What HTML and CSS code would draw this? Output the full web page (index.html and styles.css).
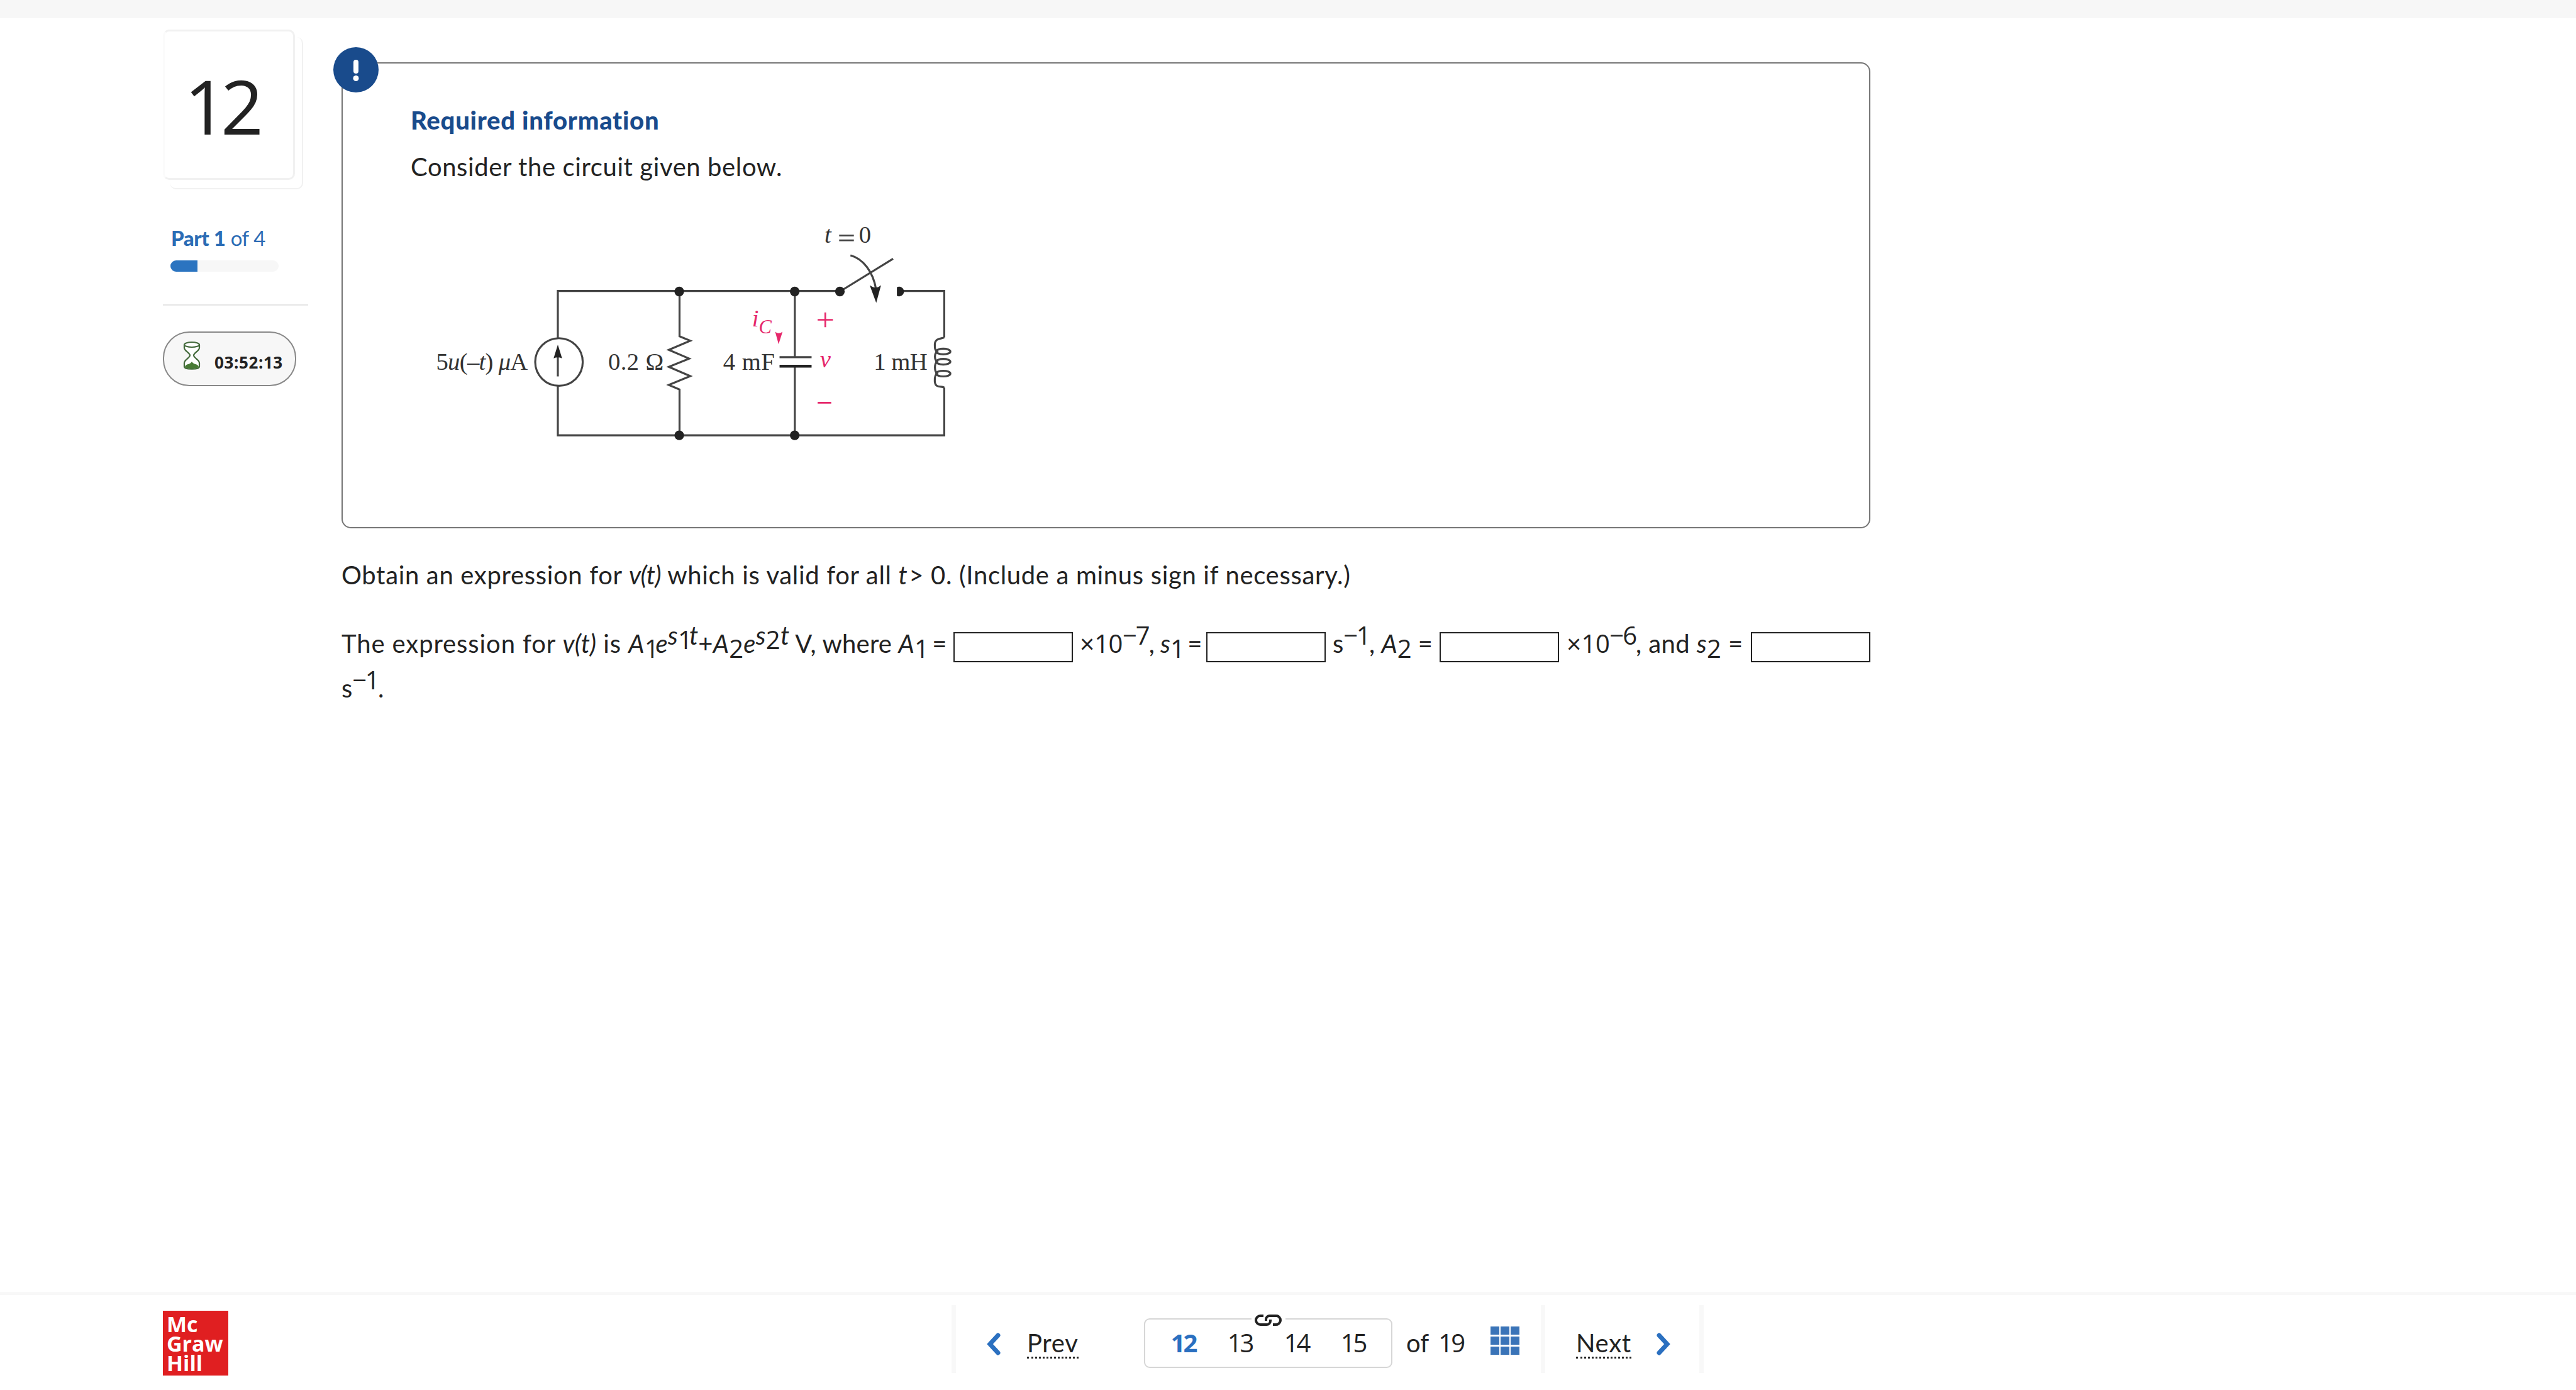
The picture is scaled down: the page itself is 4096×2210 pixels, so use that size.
FILE: index.html
```html
<!DOCTYPE html>
<html lang="en">
<head>
    <meta charset="UTF-8">
    <meta name="viewport" content="width=device-width, initial-scale=1.0">
    <title>Question 12</title>
    <link rel="stylesheet" href="styles.css">
</head>
<body>
    <div class="topbar"></div>
    <div class="page">
        <aside class="sidebar">
            <div class="number-card"><span>12</span></div>
            <div class="part"><strong>Part 1</strong> of 4</div>
            <div class="progress"><div class="progress-fill"></div></div>
            <div class="timer">
                <svg class="hourglass" viewBox="0 0 28 46">
                    <path d="M2 6v5c0 5 9 8 9 12s-9 7-9 12v6c0 5 24 5 24 0v-6c0-5-9-8-9-12s9-7 9-12V6" fill="#fff" stroke="#456b3d" stroke-width="2.2"/>
                    <ellipse cx="14" cy="6" rx="12" ry="4" fill="#fff" stroke="#456b3d" stroke-width="2.2"/>
                    <path d="M3 41c2-5 8-3 11-8 3 5 9 3 11 8 0 4-22 4-22 0z" fill="#487a35"/>
                </svg>
                <span class="time">03:52:13</span>
            </div>
        </aside>
        <main class="content">
            <section class="info-box">
                <div class="info-badge">
                    <svg viewBox="0 0 72 72">
                        <circle cx="36" cy="36" r="36" fill="#194b8c"/>
                        <path d="M36 24v14" stroke="#fff" stroke-width="8" stroke-linecap="round"/>
                        <circle cx="36" cy="49.500" r="4.500" fill="#fff"/>
                    </svg>
                </div>
                <h2>Required information</h2>
                <p class="intro">Consider the circuit given below.</p>
                <svg class="circuit" viewBox="0 0 1000 430">
                    <!-- wires -->
                    <g class="wire">
                        <path d="M245 227V144H743"/>
                        <path d="M245 311V399H927.700V315"/>
                        <path d="M848 144H927.700V226"/>
                        <path d="M663.700 144V261M663.700 277V399"/>
                    </g>
                    <!-- current source -->
                    <circle class="wire" cx="247" cy="269.500" r="42"/>
                    <path class="wire" d="M245 258V295"/>
                    <path class="solid" d="M245 239L252.500 263Q245 260 237.500 263z"/>
                    <!-- resistor -->
                    <path class="wire" d="M460 144V224L479 232L441 248L477 263.500L441 278L479 294.500L441 310L460 318V399"/>
                    <!-- capacitor -->
                    <path class="wire" d="M636.700 261H693.300"/>
                    <path class="wire thick" d="M636.700 277H693.300"/>
                    <!-- inductor -->
                    <path class="wire" d="M927.700 226C924 229 911 226 911 239C911 245 911 248 915 251C910 255 910 265 915 269C910 273 910 285 915 290C910 293 911 300 911 304C912 317 924 311 927.700 315"/>
                    <ellipse class="wire" cx="926" cy="251" rx="12.500" ry="5"/>
                    <ellipse class="wire" cx="926" cy="269" rx="12.500" ry="5"/>
                    <ellipse class="wire" cx="926" cy="290" rx="12.500" ry="5"/>
                    <!-- switch -->
                    <path class="wire" d="M743.300 145L837.300 87"/>
                    <path class="wire" d="M762 81C785 87 802 111 807 140"/>
                    <path class="solid" d="M796 134Q807 142 816 134L807.500 165z"/>
                    <circle class="solid" cx="459.500" cy="145" r="8.500"/>
                    <circle class="solid" cx="663.500" cy="145" r="8.500"/>
                    <circle class="solid" cx="743.300" cy="145" r="8.500"/>
                    <path class="solid" d="M844 137.500a8.500 8.500 0 1 1 0 15z"/>
                    <circle class="solid" cx="459.500" cy="399" r="8.500"/>
                    <circle class="solid" cx="663.500" cy="399" r="8.500"/>
                    <!-- labels -->
                    <text x="30" y="283" textLength="162">5<tspan class="it">u</tspan>(–<tspan class="it">t</tspan>) <tspan class="it">μ</tspan>A</text>
                    <text x="334" y="283" textLength="98">0.2 Ω</text>
                    <text x="537" y="283" textLength="91">4 mF</text>
                    <text x="803" y="283" textLength="95">1 mH</text>
                    <text class="it" x="716" y="59">t</text>
                    <path class="wire thin" d="M742 46H768M742 54.500H768"/>
                    <text x="777" y="59">0</text>
                    <g class="pink">
                        <text class="it" x="588" y="207">i</text>
                        <text class="it sub-c" x="600" y="219">C</text>
                        <path d="M629 216Q635 221 642 216L635 238z"/>
                        <path class="pink-line" d="M704 195H731M717.500 182V208M704 341.500H728"/>
                        <text class="it" x="708" y="279">v</text>
                    </g>
                </svg>
            </section>
            <p class="question">Obtain an expression for <i class="fn">v(t)</i> which is valid for all <i class="var">t</i> &gt; 0. (Include a minus sign if necessary.)</p>
            <div class="answer">
                <span class="lead"><span class="words">The expression for <i class="fn">v(t)</i> is </span><i>A</i><span class="sub one">1</span><i>e</i><span class="sup"><i>s</i><span class="supsub one">1</span><i>t</i></span>+<i>A</i><span class="sub">2</span><i>e</i><span class="sup"><i>s</i><span class="supsub">2</span><i>t</i></span> V, where <i>A</i><span class="sub one">1</span> =</span>
                <input type="text" class="blank">
                <span class="seg tight">×<span class="ten">10</span><span class="sup exp">−7</span>, <i>s</i><span class="sub one">1</span> =</span>
                <input type="text" class="blank">
                <span class="seg">s<span class="sup exp-one">−1</span>, <i>A</i><span class="sub">2</span> =</span>
                <input type="text" class="blank">
                <span class="seg loose">×<span class="ten">10</span><span class="sup exp">−6</span>, and <i>s</i><span class="sub">2</span> =</span>
                <input type="text" class="blank">
            </div>
            <p class="unit">s<span class="sup exp-one">−1</span>.</p>
        </main>
    </div>
    <footer class="footer">
        <div class="logo">Mc<br>Graw<br>Hill</div>
        <nav class="nav">
            <a class="prev">
                <svg class="chevron" viewBox="0 0 22 36"><path d="M18 4L5 18L18 32"/></svg>
                <span>Prev</span>
            </a>
            <div class="pager">
                <div class="pages">
                    <b>12</b><span>13</span><span>14</span><span>15</span>
                    <svg class="link-icon" viewBox="0 0 54 24">
                        <path d="M19 5H14a7 7 0 0 0 0 14H24a6 6 0 0 0 6-6v-2"/>
                        <path d="M34 19h5a7 7 0 0 0 0-14H29a6 6 0 0 0-6 6v2"/>
                    </svg>
                </div>
                <span class="of">of</span>
                <span class="total">19</span>
                <div class="grid-icon"><i></i><i></i><i></i><i></i><i></i><i></i><i></i><i></i><i></i></div>
            </div>
            <a class="next">
                <span>Next</span>
                <svg class="chevron" viewBox="0 0 22 36"><path d="M4 4L17 18L4 32"/></svg>
            </a>
        </nav>
    </footer>
</body>
</html>
```
FILE: styles.css
```css
* {
    box-sizing: border-box;
}
body {
    margin: 0;
    height: 2210px;
    display: flex;
    flex-direction: column;
    background: #fff;
    color: #222;
    font-family: Lato, "Open Sans", sans-serif;
    font-size: 40px;
    line-height: 60px;
    overflow: hidden;
}
h2, p {
    margin: 0;
    font-size: 40px;
}
/* digits with a plain, footless 1 */
.number-card,
.time,
.pages,
.total,
.sub,
.supsub,
.exp,
.exp-one,
.ten {
    font-family: "Open Sans", sans-serif;
}
.topbar {
    height: 29px;
    background: #f7f7f7;
}
.page {
    flex: 1;
    display: flex;
    padding-left: 259px;
}
/* sidebar */
.sidebar {
    width: 231px;
    margin-right: 53px;
    padding-top: 18px;
}
.number-card {
    position: relative;
    width: 210px;
    height: 239px;
    border: 3px solid #f1f1f1;
    border-left-color: #fbfbfb;
    border-radius: 10px;
    background: #fff;
    display: flex;
    justify-content: center;
    padding: 58px 26px 0 0;
    font-size: 119px;
    line-height: 120px;
    letter-spacing: -10px;
}
.number-card::after {
    content: "";
    position: absolute;
    left: 8px;
    top: 9px;
    width: 210px;
    height: 240px;
    border: 2px solid #f1f1f1;
    border-left: none;
    border-top: none;
    border-radius: 10px;
}
.part {
    margin: 62px 0 0 13px;
    font-size: 33px;
    letter-spacing: -0.4px;
    color: #2b6cb5;
    white-space: nowrap;
}
.part strong {
    font-weight: 900;
}
.progress {
    margin: 6px 0 0 12px;
    width: 172px;
    height: 18px;
    border-radius: 9px;
    background: #f7f7f7;
}
.progress-fill {
    width: 25%;
    height: 18px;
    border-radius: 9px 0 0 9px;
    background: #2b74c0;
}
.timer {
    position: relative;
    display: flex;
    align-items: flex-start;
    width: 212px;
    height: 87px;
    margin-top: 95px;
    padding: 13px 0 0 30px;
    border: 2px solid #888;
    border-radius: 42px;
    background: #f7f7f7;
}
.timer::before {
    content: "";
    position: absolute;
    left: -2px;
    top: -46px;
    width: 231px;
    height: 3px;
    background: #ebebeb;
}
.hourglass {
    width: 28px;
    height: 46px;
}
.time {
    margin: 19px 0 0 22px;
    font-size: 26px;
    line-height: 30px;
    font-weight: 700;
    letter-spacing: 0.6px;
}
/* question */
.content {
    width: 2431px;
    padding-top: 70px;
}
.info-box {
    position: relative;
    height: 741px;
    border: 2px solid #767676;
    border-radius: 15px;
    padding: 60px 0 0 108px;
}
.info-badge {
    position: absolute;
    left: -15px;
    top: -26px;
    width: 72px;
    height: 72px;
}
.info-badge svg {
    display: block;
}
.info-box h2 {
    color: #194b8c;
    font-weight: 900;
    letter-spacing: 0.75px;
}
.intro {
    margin-top: 14px;
    letter-spacing: 0.6px;
}
.circuit {
    display: block;
    width: 901px;
    height: 387px;
    margin: 38px 0 0 13px;
    font-family: "Liberation Serif", serif;
    font-size: 43px;
}
.circuit text {
    fill: #333;
}
.circuit .it {
    font-style: italic;
}
.wire {
    fill: none;
    stroke: #444;
    stroke-width: 3.5;
}
.thick {
    stroke: #222;
    stroke-width: 5;
}
.thin {
    stroke-width: 3;
}
.solid {
    fill: #222;
}
.pink {
    fill: #e6286b;
}
.circuit .pink text {
    fill: #e6286b;
}
.circuit .sub-c {
    font-size: 34px;
}
.pink-line {
    stroke: #e6286b;
    stroke-width: 3;
}
.question {
    margin-top: 44px;
    letter-spacing: 0.67px;
    white-space: nowrap;
}
.fn {
    letter-spacing: -0.6px;
}
.var {
    margin-right: -9px;
}
.answer {
    display: grid;
    grid-template-columns: 973px 191px 211px 190px 181px 191px 304px 190px;
    margin-top: 49px;
    height: 60px;
    white-space: nowrap;
}
.lead {
    letter-spacing: 0.2px;
}
.words {
    letter-spacing: 0.9px;
}
.words .fn {
    letter-spacing: 0;
}
.seg {
    padding-left: 11px;
}
.tight {
    padding-left: 10px;
    word-spacing: -1px;
}
.loose {
    letter-spacing: 0.4px;
}
.blank {
    width: 190px;
    height: 48px;
    margin-top: 12px;
    padding: 0 8px;
    border: 2px solid #222;
    border-radius: 0;
    background: #fff;
    font: inherit;
}
.sup,
.sub,
.supsub {
    position: relative;
}
.sup {
    top: -13px;
}
.sub {
    top: 8px;
}
.supsub {
    top: 7px;
}
.one {
    letter-spacing: -5px;
}
.ten {
    letter-spacing: -0.5px;
}
.exp {
    letter-spacing: -2px;
}
.exp-one {
    letter-spacing: -2.5px;
}
.unit {
    margin-top: 11px;
}
/* footer */
.footer {
    height: 156px;
    border-top: 5px solid #f8f8f8;
    display: flex;
    align-items: flex-start;
    padding-left: 259px;
}
.logo {
    width: 104px;
    height: 103px;
    margin-top: 25px;
    padding: 6px 0 0 6px;
    background: #e01f21;
    color: #fff;
    font-family: "Open Sans", sans-serif;
    font-weight: 700;
    font-size: 34px;
    line-height: 31px;
}
.nav {
    display: flex;
    margin: 16px 0 0 1150px;
    height: 108px;
    border-left: 7px solid #f8f8f8;
    border-right: 7px solid #f8f8f8;
}
.prev,
.next {
    display: flex;
    align-items: flex-start;
}
.prev {
    width: 299px;
    padding: 30px 0 0 49px;
}
.next {
    width: 252px;
    padding: 30px 0 0 49px;
    border-left: 7px solid #f8f8f8;
}
.prev span,
.next span {
    height: 55px;
    border-bottom: 3px dotted #222;
    letter-spacing: 0.7px;
}
.prev span {
    margin-left: 42px;
}
.next span {
    margin-right: 40px;
}
.chevron {
    width: 22px;
    height: 36px;
    margin-top: 14px;
    fill: none;
    stroke: #2b70c0;
    stroke-width: 7;
    stroke-linecap: round;
}
.pager {
    display: flex;
    width: 631px;
    padding-top: 21px;
}
.pages {
    position: relative;
    width: 395px;
    height: 79px;
    border: 2px solid #d6d6d6;
    border-radius: 9px;
    display: grid;
    grid-template-columns: repeat(4, 90px);
    justify-content: center;
    padding-top: 7px;
    text-align: center;
}
.pages b {
    color: #2b70c0;
    font-weight: 700;
}
.pages b,
.pages span,
.total {
    letter-spacing: -3px;
}
.link-icon {
    position: absolute;
    left: 169px;
    top: -11px;
    width: 54px;
    height: 24px;
    background: #fff;
    fill: none;
    stroke: #222;
    stroke-width: 4;
}
.of,
.total {
    margin: 9px 0 0 22px;
}
.total {
    width: 42px;
    margin-left: 15px;
}
.grid-icon {
    display: grid;
    grid-template-columns: repeat(3, 14px);
    grid-auto-rows: 13px;
    gap: 3px 2px;
    margin: 13px 0 0 41px;
}
.grid-icon i {
    background: #3a74b8;
}
```
